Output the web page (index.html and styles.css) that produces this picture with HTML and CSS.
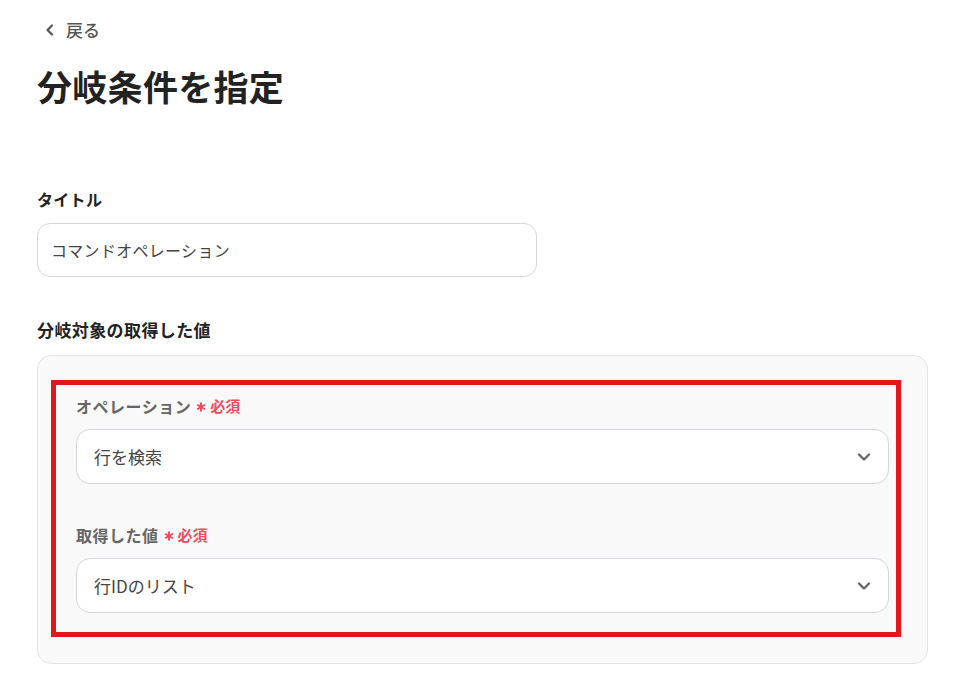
FILE: index.html
```html
<!DOCTYPE html>
<html lang="ja">
<head>
<meta charset="utf-8">
<link rel="stylesheet" href="styles.css">
</head>
<body>
<div class="page">
  <a class="back" href="#">
    <svg class="back-icon" width="10" height="12" viewBox="0 0 10 12"><path d="M7 1.5 L2.5 6 L7 10.5" fill="none" stroke="#555" stroke-width="2.2" stroke-linecap="round" stroke-linejoin="round"/></svg>
    <span>戻る</span>
  </a>
  <h1 class="title">分岐条件を指定</h1>

  <div class="field-label label-title">タイトル</div>
  <div class="text-input">コマンドオペレーション</div>

  <div class="field-label label-target">分岐対象の取得した値</div>
  <div class="panel">
    <div class="highlight">
      <div class="sub-label">オペレーション<span class="req"><svg class="star" width="10" height="10" viewBox="0 0 10 10"><path d="M5 0.5 V9.5 M1.1 2.75 L8.9 7.25 M1.1 7.25 L8.9 2.75" stroke="#f04a5e" stroke-width="2" fill="none"/></svg>必須</span></div>
      <div class="select">
        <span>行を検索</span>
        <svg class="chev" width="14" height="10" viewBox="0 0 14 10"><path d="M2 2.5 L7 7.5 L12 2.5" fill="none" stroke="#666" stroke-width="2.4" stroke-linecap="round" stroke-linejoin="round"/></svg>
      </div>
      <div class="sub-label second">取得した値<span class="req"><svg class="star" width="10" height="10" viewBox="0 0 10 10"><path d="M5 0.5 V9.5 M1.1 2.75 L8.9 7.25 M1.1 7.25 L8.9 2.75" stroke="#f04a5e" stroke-width="2" fill="none"/></svg>必須</span></div>
      <div class="select">
        <span>行IDのリスト</span>
        <svg class="chev" width="14" height="10" viewBox="0 0 14 10"><path d="M2 2.5 L7 7.5 L12 2.5" fill="none" stroke="#666" stroke-width="2.4" stroke-linecap="round" stroke-linejoin="round"/></svg>
      </div>
    </div>
  </div>
</div>
</body>
</html>
```
FILE: styles.css
```css
* { box-sizing: border-box; }
html, body { margin: 0; background: #fff; }
body {
  font-family: "Noto Sans CJK JP", "Noto Sans", sans-serif;
  color: #222;
}
.page {
  padding: 18px 0 0 37px;
  width: 929px;
}
.back {
  display: flex;
  align-items: center;
  gap: 11px;
  height: 24px;
  padding-left: 8px;
  color: #555;
  text-decoration: none;
  font-size: 17px;
  font-weight: 500;
  line-height: 24px;
}
.back-icon { display: block; }
.title {
  margin: 20px 0 0 0;
  font-size: 35px;
  line-height: 48px;
  font-weight: 700;
  color: #222;
  letter-spacing: 0.3px;
}
.field-label {
  font-size: 16px;
  line-height: 24px;
  font-weight: 700;
  color: #222;
}
.label-title { margin-top: 77px; letter-spacing: 0.3px; }
.label-target { margin-top: 41px; font-size: 17px; letter-spacing: 0.4px; }
.text-input {
  margin-top: 12px;
  width: 500px;
  height: 54px;
  border: 1px solid #d3d6dc;
  border-radius: 13px;
  padding: 0 13px;
  display: flex;
  align-items: center;
  font-size: 16px;
  letter-spacing: 0.3px;
  color: #444;
  background: #fff;
}
.panel {
  margin-top: 13px;
  width: 891px;
  border: 1px solid #e4e4e6;
  border-radius: 14px;
  background: #f9f9fa;
  padding: 24px 26px 26px 13px;
}
.highlight {
  border: 5px solid #e8141c;
  padding: 9px 7px 19px 20px;
}
.sub-label {
  display: flex;
  align-items: center;
  font-size: 16px;
  line-height: 24px;
  font-weight: 700;
  color: #666;
  letter-spacing: 0.5px;
}
.sub-label.second { margin-top: 39px; }
.req {
  display: inline-flex;
  align-items: center;
  margin-left: 5px;
  color: #f04a5e;
  font-size: 15px;
  font-weight: 700;
  letter-spacing: 0;
}
.star {
  display: block;
  margin-right: 4px;
  position: relative;
  top: 1px;
}
.select {
  margin-top: 11px;
  height: 55px;
  border: 1px solid #d3d6dc;
  border-radius: 14px;
  background: #fff;
  padding: 0 17px 0 17px;
  display: flex;
  align-items: center;
  justify-content: space-between;
  font-size: 17px;
  color: #444;
}
.chev { display: block; }
```
